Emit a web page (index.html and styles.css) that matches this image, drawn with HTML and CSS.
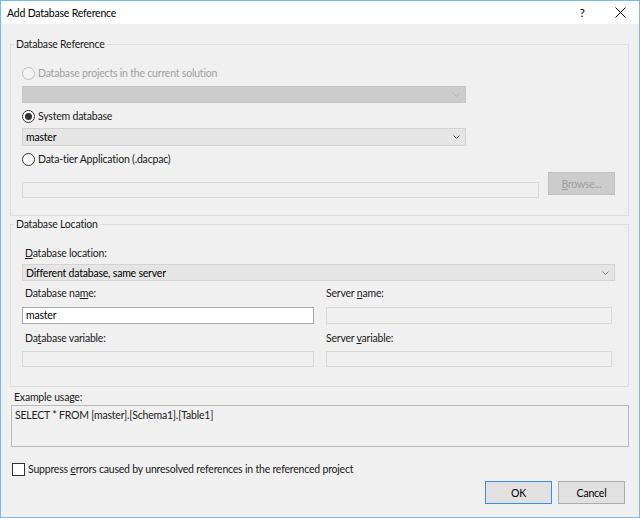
FILE: index.html
```html
<!DOCTYPE html>
<html lang="en">
<head>
    <meta charset="UTF-8">
    <title>Add Database Reference</title>
    <link rel="stylesheet" href="styles.css">
</head>
<body>
    <div class="window">
        <div class="titlebar">
            <span class="title">Add Database Reference</span>
            <span class="help">?</span>
            <span class="close">
                <svg width="11" height="11" viewBox="0 0 11 11"><path d="M0.5 0.5 L10.5 10.5 M10.5 0.5 L0.5 10.5" stroke="#000" stroke-width="1" fill="none"/></svg>
            </span>
        </div>

        <div class="content">
            <fieldset class="group">
                <legend>Database Reference</legend>
                <div class="group-body ref-body">
                    <div class="radio-row disabled">
                        <span class="radio"></span>
                        <span>Database projects in the current solution</span>
                    </div>
                    <div class="combo combo-disabled combo-short">
                        <span></span>
                        <svg class="chevron" width="7" height="4" viewBox="0 0 7 4"><path d="M0.5 0.5 L3.5 3.5 L6.5 0.5" stroke="#b0b0b0" fill="none"/></svg>
                    </div>
                    <div class="radio-row">
                        <span class="radio checked"></span>
                        <span>System database</span>
                    </div>
                    <div class="combo combo-short combo-system">
                        <span>master</span>
                        <svg class="chevron" width="7" height="4" viewBox="0 0 7 4"><path d="M0.5 0.5 L3.5 3.5 L6.5 0.5" stroke="#606060" fill="none"/></svg>
                    </div>
                    <div class="radio-row">
                        <span class="radio"></span>
                        <span>Data-tier Application (.dacpac)</span>
                    </div>
                    <div class="browse-row">
                        <div class="textbox textbox-disabled dacpac-path"></div>
                        <button class="btn btn-disabled"><u>B</u>rowse...</button>
                    </div>
                </div>
            </fieldset>

            <fieldset class="group">
                <legend>Database Location</legend>
                <div class="group-body loc-body">
                    <div class="field-label"><u>D</u>atabase location:</div>
                    <div class="combo combo-location">
                        <span>Different database, same server</span>
                        <svg class="chevron" width="7" height="4" viewBox="0 0 7 4"><path d="M0.5 0.5 L3.5 3.5 L6.5 0.5" stroke="#808080" fill="none"/></svg>
                    </div>
                    <div class="field-grid">
                        <div class="field-label">Database na<u>m</u>e:</div>
                        <div class="field-label right-label">Server <u>n</u>ame:</div>
                        <div class="textbox textbox-input">master</div>
                        <div class="textbox textbox-disabled right-box"></div>
                        <div class="field-label var-label">Da<u>t</u>abase variable:</div>
                        <div class="field-label var-label right-label">Server <u>v</u>ariable:</div>
                        <div class="textbox textbox-disabled var-box"></div>
                        <div class="textbox textbox-disabled right-box var-box"></div>
                    </div>
                </div>
            </fieldset>

            <div class="example-label">Example usage:</div>
            <div class="example-box">SELECT * FROM [master].[Schema1].[Table1]</div>

            <div class="check-row">
                <span class="checkbox"></span>
                <span>Suppress <u>e</u>rrors caused by unresolved references in the referenced project</span>
            </div>

            <div class="buttons">
                <button class="btn btn-default">OK</button>
                <button class="btn">Cancel</button>
            </div>
        </div>
    </div>
</body>
</html>
```

FILE: styles.css
```css
body {
    margin: 0;
    padding: 0;
    font-family: 'Lato', 'Liberation Sans', sans-serif;
    font-size: 10.5px;
    letter-spacing: -0.2px;
    color: #1a1a1a;
}
.window {
    width: 640px;
    height: 518px;
    box-sizing: border-box;
    border: 1px solid #7db6e8;
    background-color: #f0f0f0;
    display: flex;
    flex-direction: column;
}
.titlebar {
    height: 23px;
    background-color: white;
    display: flex;
    align-items: center;
    padding-left: 6px;
}
.title {
    flex: 1;
    color: #000;
    font-size: 10.5px;
}
.help {
    width: 10px;
    text-align: center;
    margin-right: 28px;
    color: #000;
    font-size: 12px;
}
.close {
    width: 11px;
    height: 11px;
    margin-right: 13px;
    display: flex;
}
.content {
    flex: 1;
    padding: 12px 10px 0 9px;
    display: flex;
    flex-direction: column;
}

/* group boxes */
.group {
    margin: 0;
    padding: 0;
    border: 1px solid #dcdcdc;
    min-width: 0;
}
.group legend {
    margin-left: 3px;
    padding: 0 2px;
    line-height: 16px;
    color: #1a1a1a;
}
.group-body {
    display: flex;
    flex-direction: column;
    padding: 0 13px 0 11px;
}
.ref-body {
    padding-top: 13px;
    padding-bottom: 17px;
}
.loc-body {
    padding-top: 13px;
    padding-bottom: 19px;
}

/* radios */
.radio-row {
    display: flex;
    align-items: center;
    height: 16px;
    margin-top: 5px;
    gap: 3px;
}
.radio-row:first-child {
    margin-top: 0;
}
.radio-row.disabled {
    color: #a0a0a0;
}
.radio {
    width: 11px;
    height: 11px;
    border: 1px solid #333;
    border-radius: 50%;
    background-color: white;
    position: relative;
}
.disabled .radio {
    border-color: #bcbcbc;
    background-color: #f4f4f4;
}
.radio.checked::after {
    content: '';
    position: absolute;
    left: 2px;
    top: 2px;
    width: 7px;
    height: 7px;
    border-radius: 50%;
    background-color: #333;
}

/* combos */
.combo {
    box-sizing: border-box;
    height: 17px;
    border: 1px solid #d3d3d3;
    background-color: #e5e5e5;
    display: flex;
    align-items: center;
    justify-content: space-between;
    padding: 0 5px 0 3px;
    color: #000;
}
.combo-short {
    width: 444px;
    margin-top: 5px;
}
.combo-system {
    height: 18px;
    margin-top: 4px;
}
.combo-disabled {
    background-color: #cccccc;
    border-color: #c6c6c6;
}
.combo-location {
    margin-top: 3px;
}

/* text boxes */
.textbox {
    box-sizing: border-box;
    height: 17px;
    border: 1px solid #d9d9d9;
    background-color: #f0f0f0;
    padding: 0 3px;
    line-height: 15px;
    color: #000;
}
.textbox-input {
    background-color: white;
    border-color: #a8a8a8;
}
.browse-row {
    display: flex;
    gap: 9px;
    margin-top: 5px;
    align-items: flex-start;
}
.dacpac-path {
    flex: 1;
    height: 16px;
    margin-top: 10px;
}

/* buttons */
.btn {
    box-sizing: border-box;
    width: 67px;
    height: 23px;
    border: 1px solid #adadad;
    background-color: #e1e1e1;
    font-family: inherit;
    font-size: 10.5px;
    letter-spacing: -0.2px;
    color: #000;
    padding: 0;
}
.btn-disabled {
    background-color: #cccccc;
    border-color: #bfbfbf;
    color: #a0a0a0;
}
.btn-default {
    border-color: #3c8ee0;
}

/* location fields */
.field-label {
    height: 16px;
    line-height: 16px;
    padding-left: 3px;
    color: #222;
}
.field-grid .right-label {
    padding-left: 0;
}
.field-grid {
    display: grid;
    grid-template-columns: 292px 1fr;
    column-gap: 12px;
    margin-top: 4px;
}
.field-grid .textbox {
    margin-top: 6px;
}
.right-box {
    margin-right: 3px;
}
.var-label {
    margin-top: 6px;
}
.field-grid .var-box {
    margin-top: 5px;
    height: 16px;
}

/* example */
.example-label {
    margin-top: 2px;
    height: 16px;
    line-height: 16px;
    padding-left: 4px;
}
.example-box {
    box-sizing: border-box;
    height: 42px;
    margin-left: 1px;
    border: 1px solid #b9b9b9;
    padding: 1px 3px;
    line-height: 16px;
    color: #222;
}

/* checkbox */
.check-row {
    display: flex;
    align-items: center;
    height: 16px;
    margin-top: 14px;
    padding-left: 2px;
    gap: 3px;
}
.checkbox {
    width: 11px;
    height: 11px;
    border: 1px solid #333;
    background-color: white;
}
.buttons {
    display: flex;
    justify-content: flex-end;
    gap: 6px;
    margin-top: 4px;
    padding-right: 4px;
}
```
